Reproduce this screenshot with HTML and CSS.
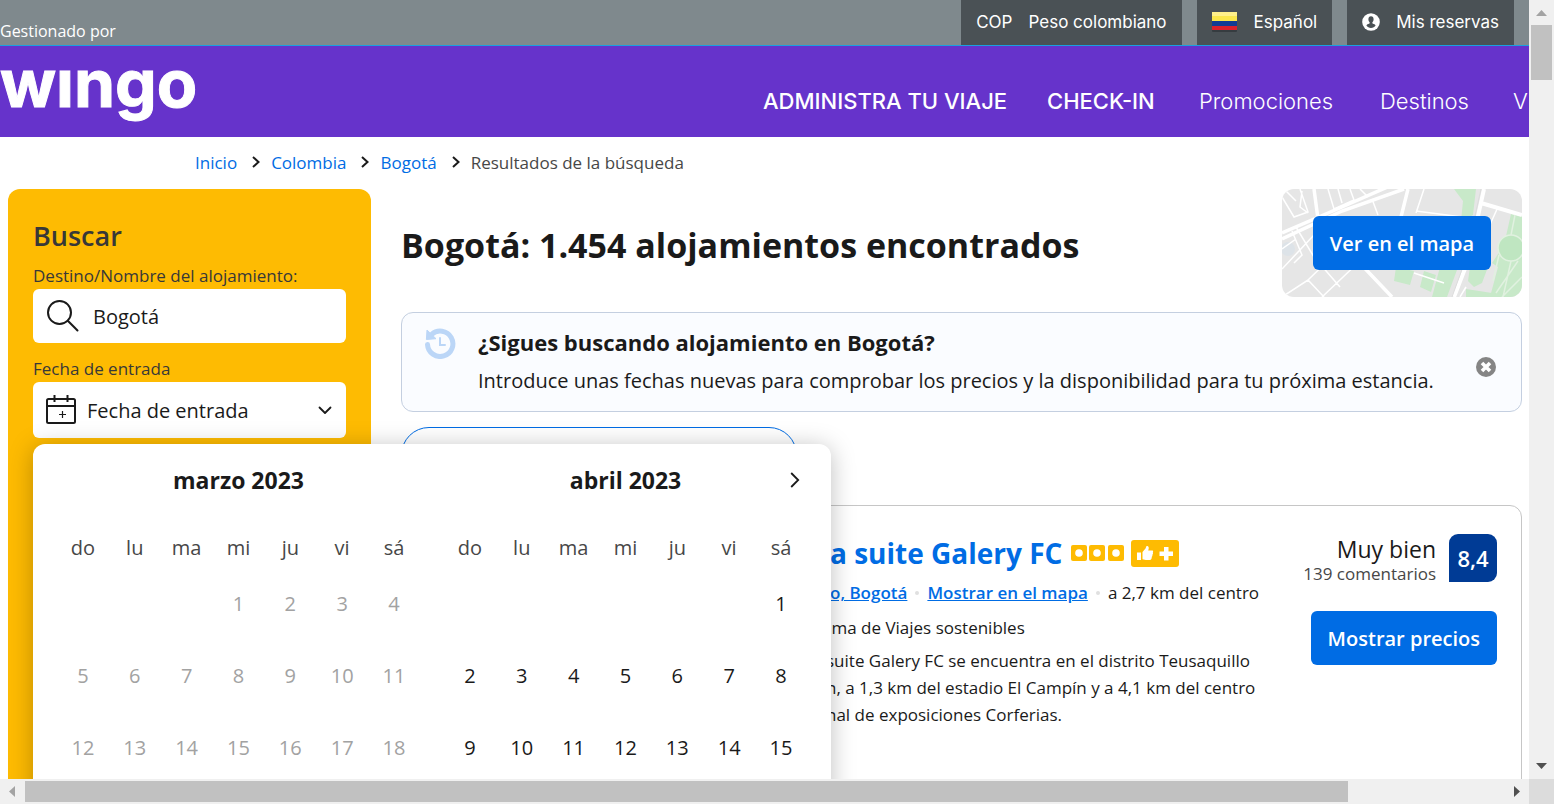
FILE: index.html
```html
<!DOCTYPE html>
<html lang="es">
<head>
<meta charset="utf-8">
<meta name="viewport" content="width=device-width, initial-scale=1">
<title>Bogotá: alojamientos</title>
<link rel="stylesheet" href="styles.css">
</head>
<body>
<div class="window">
  <div class="viewport">
    <header class="topbar">
      <span class="managed">Gestionado por</span>
      <div class="tabs">
        <button class="tab" type="button"><span>COP</span><span>Peso colombiano</span></button>
        <button class="tab tab-lang" type="button">
          <svg width="26" height="20" viewBox="0 0 26 20" aria-hidden="true"><rect x="0" y="1" width="25" height="19" rx="1" fill="#363c40"/><rect width="25" height="10" fill="#fbe74b"/><rect width="25" height="4" fill="#fff08a"/><rect y="9" width="25" height="5" fill="#113c93"/><rect y="14" width="25" height="4" fill="#d9202b"/></svg>
          <span>Español</span>
        </button>
        <button class="tab" type="button">
          <svg width="18" height="18" viewBox="0 0 18 18" aria-hidden="true"><circle cx="9" cy="9" r="8.8" fill="#fff"/><path d="M9 3.2c1.7 0 2.6 1.3 2.6 3 0 1.300-.5 2.300-1.200 2.900v1.100c.2.700 2.700.7 3.200 2.200C12.600 14 11 14.900 9 14.900S5.400 14 4.400 12.400c.5-1.500 3-1.500 3.200-2.200V9.100C6.900 8.500 6.400 7.500 6.400 6.200c0-1.700.9-3 2.600-3z" fill="#4a5155"/></svg>
          <span>Mis reservas</span>
        </button>
      </div>
    </header>
    <div class="brandbar">
      <a class="logo" href="#" aria-label="Wingo">wıngo</a>
      <nav class="nav" aria-label="Principal">
        <a class="strong" href="#">ADMINISTRA TU VIAJE</a>
        <a class="strong" href="#">CHECK-IN</a>
        <a href="#">Promociones</a>
        <a href="#">Destinos</a>
        <a href="#">V</a>
      </nav>
    </div>
    <nav class="crumbs" aria-label="Ruta">
      <a href="#">Inicio</a>
      <svg width="8" height="12" viewBox="0 0 8 12" aria-hidden="true"><path d="M1 1l5.500 5L1 11"/></svg>
      <a href="#">Colombia</a>
      <svg width="8" height="12" viewBox="0 0 8 12" aria-hidden="true"><path d="M1 1l5.500 5L1 11"/></svg>
      <a href="#">Bogotá</a>
      <svg width="8" height="12" viewBox="0 0 8 12" aria-hidden="true"><path d="M1 1l5.500 5L1 11"/></svg>
      <span>Resultados de la búsqueda</span>
    </nav>
    <div class="columns">
      <form class="search">
        <h2>Buscar</h2>
        <label for="dest">Destino/Nombre del alojamiento:</label>
        <div class="field">
          <svg width="36" height="36" viewBox="0 0 36 36" fill="none" stroke="#1a1a1a" stroke-width="2" stroke-linecap="round" aria-hidden="true"><circle cx="14.500" cy="14.500" r="11.500"/><path d="M22.800 22.800L32.500 32.500"/></svg>
          <input id="dest" type="text" value="Bogotá">
        </div>
        <label for="checkin">Fecha de entrada</label>
        <div class="field field-date">
          <svg width="32" height="32" viewBox="0 0 32 32" fill="none" stroke="#1a1a1a" stroke-width="2" aria-hidden="true"><rect x="2" y="5" width="28" height="24" rx="1.500"/><path d="M2 12h28M9.500 1v7M22.500 1v7"/><path d="M14 20.500h7M17.500 17v7" stroke-width="1.200"/></svg>
          <select id="checkin"><option>Fecha de entrada</option></select>
          <svg class="caret" width="14" height="9" viewBox="0 0 14 9" fill="none" stroke="#1a1a1a" stroke-width="1.800" stroke-linecap="round" stroke-linejoin="round" aria-hidden="true"><path d="M1.500 1.500L7 7l5.500-5.500"/></svg>
          <div class="calendar">
            <table class="month">
              <caption>marzo 2023</caption>
              <thead><tr><th>do</th><th>lu</th><th>ma</th><th>mi</th><th>ju</th><th>vi</th><th>sá</th></tr></thead>
              <tbody class="past">
                <tr><td></td><td></td><td></td><td>1</td><td>2</td><td>3</td><td>4</td></tr>
                <tr><td>5</td><td>6</td><td>7</td><td>8</td><td>9</td><td>10</td><td>11</td></tr>
                <tr><td>12</td><td>13</td><td>14</td><td>15</td><td>16</td><td>17</td><td>18</td></tr>
              </tbody>
            </table>
            <table class="month">
              <caption>abril 2023</caption>
              <thead><tr><th>do</th><th>lu</th><th>ma</th><th>mi</th><th>ju</th><th>vi</th><th>sá</th></tr></thead>
              <tbody>
                <tr><td></td><td></td><td></td><td></td><td></td><td></td><td>1</td></tr>
                <tr><td>2</td><td>3</td><td>4</td><td>5</td><td>6</td><td>7</td><td>8</td></tr>
                <tr><td>9</td><td>10</td><td>11</td><td>12</td><td>13</td><td>14</td><td>15</td></tr>
              </tbody>
            </table>
            <button class="next" type="button" aria-label="Mes siguiente"><svg width="10" height="16" viewBox="0 0 10 16" fill="none" stroke="#1a1a1a" stroke-width="1.800" aria-hidden="true"><path d="M1.200 1l7 7-7 7"/></svg></button>
          </div>
        </div>
      </form>
      <main class="results">
        <div class="heading">
          <h1>Bogotá: 1.454 alojamientos encontrados</h1>
          <div class="map">
            <svg class="map-art" viewBox="0 0 240 108" preserveAspectRatio="xMidYMid slice" aria-hidden="true">
              <rect width="240" height="108" fill="#e6e6e6"/>
              <g fill="#c8e9c9">
                <path d="M172 0h22l-3 26-12 6 2-20zM229 25l11 2v81h-32l8-30-6-4 12-18zM114 78l18 4-4 14-16-4zM142 82l12 4-5 17-11-5zM158 78l17 3-10 27h-15zM188 78h18l-6 16-8 4-6-6zM184 100l26 4v4h-26z"/>
              </g>
              <circle cx="6" cy="60" r="7" fill="#dde3e8"/>
              <path d="M202 0l-16 72-14 36M199 14l41 12" stroke="#fff" stroke-width="4" fill="none"/>
              <path d="M0 50L60 22 122 0M0 44l60-26L110-4M32 0l4 30 74 78M126 0l-10 40" stroke="#fff" stroke-width="3.500" fill="none"/>
              <g stroke="#fff" stroke-width="1.500" fill="none">
                <path d="M0 8l12 20 14-5-8-23M4 2l10 10M20 2l-2 16 8 6M46 0l6 20 20-9-4-11M56 0l4 14M78 0l8 8M14 38l18 30 26 30M32 46L0 80M0 108l26-17 16 17M26 91L56 62M40 108l40-38M10 42l10 24-8 8M0 60l14-10M90 10l6 16M134 22l46 6M142 0l-8 24M132 84l30 10M184 98l-6 10M206 40l10-22"/>
              </g>
              <g stroke="#e1f1e0" stroke-width="1.500" fill="none"><circle cx="229" cy="59" r="13" fill="#bfe6c1"/><path d="M229 46l4-20M217 66l-6 26M229 72l-8 36M236 72l-22 32M240 88l-20 20"/></g>
              <path d="M199 0l-16 72-13 36" stroke="#dcdcdc" stroke-width="1" fill="none"/>
            </svg>
            <button class="btn btn-map" type="button">Ver en el mapa</button>
          </div>
        </div>
        <section class="notice">
          <svg class="history" width="32" height="32" viewBox="0 0 32 32" fill="none" aria-hidden="true"><path d="M3.500 17.500A12.700 12.700 0 1 0 7.500 7.500" stroke="#bbd6f7" stroke-width="5" stroke-linecap="round"/><path d="M3 3l-.6 9.500 9.600-.8z" fill="#bbd6f7" stroke="#bbd6f7" stroke-linejoin="round"/><path d="M16 11v7h5" stroke="#bbd6f7" stroke-width="2" stroke-linecap="round"/></svg>
          <div class="notice-text">
            <h3>¿Sigues buscando alojamiento en Bogotá?</h3>
            <p>Introduce unas fechas nuevas para comprobar los precios y la disponibilidad para tu próxima estancia.</p>
          </div>
          <button class="close" type="button" aria-label="Cerrar"><svg width="20" height="20" viewBox="0 0 20 20" aria-hidden="true"><circle cx="10" cy="10" r="10" fill="#858585"/><path d="M6 6l8 8M14 6l-8 8" stroke="#fff" stroke-width="3.600"/></svg></button>
        </section>
        <button class="sort" type="button" aria-label="Ordenar"></button>
        <article class="card">
          <div class="info">
            <div class="title-row">
              <h2><a href="#">a suite Galery FC</a></h2>
              <svg width="54" height="16" viewBox="0 0 54 16" aria-hidden="true"><g fill="#febb02"><rect width="16" height="16" rx="2"/><rect x="18" width="16" height="16" rx="2"/><rect x="37" width="16" height="16" rx="2"/></g><g fill="#fff"><circle cx="8" cy="8" r="3.800"/><circle cx="26" cy="8" r="3.800"/><circle cx="45" cy="8" r="3.800"/></g></svg>
              <svg width="48" height="27" viewBox="0 0 48 27" aria-hidden="true"><rect width="48" height="27" rx="3" fill="#febb02"/><path d="M6 12.500h4V20H6zM11.500 12l3-3.500L15.500 6c2.500 0 2.700 2 1.700 4.500h4.300c.8.300.8 1.200.3 2 .4.800.2 1.700-.4 2.200.2.900 0 1.600-.6 2.100 0 1.600-.5 3.200-2 3.200h-4l-3.300-.8zM33 7h4.500v4.500H42V16h-4.500v4.500H33V16h-4.500v-4.500H33z" fill="#fff"/></svg>
            </div>
            <div class="place">
              <a href="#">o, Bogotá</a><i></i><a href="#">Mostrar en el mapa</a><i></i><span>a 2,7 km del centro</span>
            </div>
            <p class="green">ama de Viajes sostenibles</p>
            <p class="desc">suite Galery FC se encuentra en el distrito Teusaquillo<br>n, a 1,3 km del estadio El Campín y a 4,1 km del centro<br>nal de exposiciones Corferias.</p>
          </div>
          <div class="side">
            <div class="score">
              <div class="score-text"><strong>Muy bien</strong><span>139 comentarios</span></div>
              <div class="badge">8,4</div>
            </div>
            <button class="btn" type="button">Mostrar precios</button>
          </div>
        </article>
      </main>
    </div>
  </div>
  <div class="bar bar-v" aria-hidden="true">
    <svg width="25" height="25" viewBox="0 0 25 25"><path d="M7 16l5.500-6 5.500 6z" fill="#a3a3a3"/></svg>
    <div class="thumb"></div>
    <svg width="25" height="25" viewBox="0 0 25 25"><path d="M7 9l5.500 6L18 9z" fill="#505050"/></svg>
  </div>
  <div class="bar bar-h" aria-hidden="true">
    <svg width="25" height="25" viewBox="0 0 25 25"><path d="M15 7l-6 5.500 6 5.500z" fill="#a3a3a3"/></svg>
    <div class="thumb"></div>
    <svg width="25" height="25" viewBox="0 0 25 25"><path d="M10 7l6 5.500-6 5.500z" fill="#505050"/></svg>
  </div>
  <div class="corner"></div>
</div>
</body>
</html>
```
FILE: styles.css
```css
* { box-sizing: border-box; }
body {
  margin: 0;
  font-family: "Open Sans", "Noto Sans", sans-serif;
  font-size: 17px;
  color: #1a1a1a;
  background: #fff;
}
h1, h2, h3, p { margin: 0; }
button, input, select { font: inherit; color: inherit; border: 0; padding: 0; background: none; }
a { color: #006ce4; text-decoration: none; }
svg { flex: none; display: block; }

.window {
  display: grid;
  grid-template-columns: minmax(0, 1fr) 25px;
  grid-template-rows: minmax(0, 1fr) 25px;
  height: 100vh;
}
.viewport { overflow: hidden; }

.topbar {
  display: flex;
  justify-content: space-between;
  height: 46px;
  background: #7f898d;
  border-bottom: 1px solid #1aa0e0;
}
.managed { align-self: flex-end; padding-bottom: 3px; font-size: 16px; line-height: 22px; color: #fff; }
.tabs { display: flex; gap: 15px; padding-right: 15px; font-family: Inter, sans-serif; }
.tab {
  display: flex;
  align-items: center;
  gap: 16px;
  padding: 0 15px 2px;
  background: #4a5155;
  color: #fff;
}

.brandbar {
  display: flex;
  justify-content: space-between;
  height: 91px;
  background: #6633cb;
}
.logo {
  font: 700 66px/74px Inter, sans-serif;
  color: #fff;
  -webkit-text-stroke: 1px #fff;
}
.nav {
  flex: none;
  display: grid;
  grid-template-columns: 240px 108px 137px 89px 16px;
  column-gap: 44px;
  padding-top: 40px;
  font: 300 22px/30px Inter, sans-serif;
  white-space: nowrap;
}
.nav a { color: #fff; }
.nav .strong { font-weight: 500; }

.crumbs {
  display: flex;
  align-items: center;
  height: 50px;
  margin-bottom: 2px;
  padding-left: 195px;
  font-size: 17px;
  color: #474747;
}
.crumbs svg { margin: 0 11px 0 15px; fill: none; stroke: #1a1a1a; stroke-width: 2; }

.columns { display: flex; gap: 30px; padding: 0 7px 0 8px; }
.search {
  flex: 0 0 363px;
  min-width: 0;
  height: 900px;
  padding: 29px 25px;
  border-radius: 12px;
  background: #febb02;
  color: #383838;
}
.search h2 { font-size: 27px; line-height: 36px; font-weight: 600; }
.search label { display: block; padding: 9px 0 1px; line-height: 25px; font-size: 17px; }
.field {
  display: flex;
  align-items: center;
  gap: 12px;
  height: 54px;
  margin-bottom: 4px;
  padding: 0 12px;
  border-radius: 6px;
  background: #fff;
  color: #1a1a1a;
  font-size: 20px;
}
.field input { flex: 1; min-width: 0; outline: 0; }
.field select { flex: 1; min-width: 0; appearance: none; outline: 0; }
.field-date { position: relative; height: 56px; gap: 10px; }
.caret { margin-right: 2px; }

.calendar {
  position: absolute;
  z-index: 2;
  top: 62px;
  left: 0;
  display: grid;
  grid-template-columns: 363px 363px;
  gap: 24px;
  padding: 17px 24px 24px;
  border-radius: 12px;
  background: #fff;
  box-shadow: 0 3px 24px rgba(0, 0, 0, .26);
}
.month { border-collapse: collapse; table-layout: fixed; width: 100%; text-align: center; }
.month caption { padding-bottom: 28px; font-size: 23px; line-height: 38px; font-weight: 700; }
.month th { height: 40px; padding: 0; font-weight: 400; color: #474747; }
.month td { height: 72px; padding: 0; }
.past { color: #a2a2a2; }
.next { position: absolute; top: 20px; right: 23px; padding: 8px; }

.results { flex: 1; min-width: 0; }
.heading { display: flex; justify-content: space-between; align-items: center; }
h1 { font-size: 34px; line-height: 46px; font-weight: 700; padding-top: 4px; }
.map {
  display: grid;
  place-items: center;
  width: 240px;
  height: 108px;
  border-radius: 12px;
  overflow: hidden;
}
.map > * { grid-area: 1 / 1; }
.map-art { width: 100%; height: 100%; }
.btn {
  height: 54px;
  padding: 0 17px;
  border-radius: 6px;
  background: #006ce4;
  color: #fff;
  font-size: 20px;
  font-weight: 600;
  white-space: nowrap;
}
.btn-map { z-index: 1; }

.notice {
  display: flex;
  align-items: center;
  min-height: 100px;
  margin-top: 15px;
  padding: 0 25px 0 22px;
  border: 1px solid #c4cfe0;
  border-radius: 12px;
  background: #fafcff;
}
.history { align-self: flex-start; margin-top: 14px; }
.notice-text { flex: 1; padding-left: 22px; }
.notice h3 { font-size: 22px; line-height: 38px; }
.notice p { font-size: 20px; line-height: 40px; }
.close { margin-top: 10px; }

.sort {
  display: block;
  width: 396px;
  height: 56px;
  margin-top: 15px;
  border: 1px solid #006ce4;
  border-radius: 28px;
}
.card {
  display: flex;
  justify-content: space-between;
  height: 420px;
  margin-top: 22px;
  padding: 28px 24px 24px 420px;
  border: 1px solid #c6c6c6;
  border-radius: 12px;
  white-space: nowrap;
}
.title-row { display: flex; align-items: center; gap: 6px; padding-left: 8px; }
.title-row h2 { font-size: 28px; line-height: 38px; padding-right: 3px; }
.place { display: flex; align-items: center; padding: 6px 0 0 8px; line-height: 30px; }
.place a { font-weight: 600; text-decoration: underline; }
.place i { width: 4px; height: 4px; margin: 0 8px; border-radius: 2px; background: #e0e0e0; }
.green { line-height: 27px; padding-top: 6px; }
.desc { line-height: 27px; padding: 6px 0 0 4px; }
.side { display: flex; flex-direction: column; align-items: flex-end; gap: 27px; }
.score { display: flex; gap: 13px; }
.score-text { display: flex; flex-direction: column; align-items: flex-end; }
.score-text strong { font-size: 23px; line-height: 30px; font-weight: 500; }
.score-text span { line-height: 20px; color: #474747; }
.badge {
  display: grid;
  place-items: center;
  width: 48px;
  height: 48px;
  border-radius: 9px 9px 9px 0;
  background: #003b95;
  color: #fff;
  font-size: 22px;
  font-weight: 600;
}

.bar { display: flex; background: #f0f0f0; }
.bar .thumb { background: #c1c1c1; }
.bar svg:last-child { margin: auto 0 0 auto; }
.bar-v { flex-direction: column; }
.bar-v .thumb { height: 7%; margin: 0 2px; }
.bar-h .thumb { width: 86.500%; margin: 2px 0; }
.corner { background: #dcdcdc; }
```
